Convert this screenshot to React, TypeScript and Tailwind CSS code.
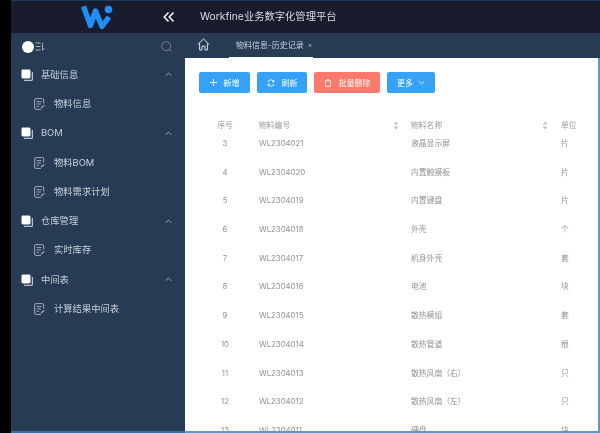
const font = { fontFamily: '"Inter","Noto Sans CJK SC",sans-serif' };

const rows = [
  ["3", "WL2304021", "液晶显示屏", "片"],
  ["4", "WL2304020", "内置触摸板", "片"],
  ["5", "WL2304019", "内置键盘", "片"],
  ["6", "WL2304018", "外壳", "个"],
  ["7", "WL2304017", "机身外壳", "套"],
  ["8", "WL2304016", "电池", "块"],
  ["9", "WL2304015", "散热模组", "套"],
  ["10", "WL2304014", "散热管道", "根"],
  ["11", "WL2304013", "散热风扇（右）", "只"],
  ["12", "WL2304012", "散热风扇（左）", "只"],
  ["13", "WL2304011", "硬盘", "块"],
];

const menu = [
  { title: "基础信息", items: ["物料信息"] },
  { title: "BOM", items: ["物料BOM", "物料需求计划"] },
  { title: "仓库管理", items: ["实时库存"] },
  { title: "中间表", items: ["计算结果中间表"] },
];

function Logo() {
  return (
    <svg width="36" height="28" viewBox="0 0 36 28" fill="none">
      <path d="M4.5 3.5 L11.5 22.5 L16.5 8 L23 23.5 L30 14" stroke="#1e8ff5" strokeWidth="5.4" strokeLinejoin="round" />
      <circle cx="29.5" cy="6.5" r="3.8" fill="#1e8ff5" />
    </svg>
  );
}

function SectionIcon() {
  return (
    <svg width="12" height="12" viewBox="0 0 12 12" fill="none">
      <path d="M3 11.3 H11.3 V3" stroke="#dfe4ea" strokeWidth="1" />
      <rect x="0.5" y="0.5" width="9" height="9" rx="1.4" fill="#ffffff" />
    </svg>
  );
}

function ItemIcon() {
  return (
    <svg width="11" height="12" viewBox="0 0 11 12" fill="none" stroke="#a9b7c8" strokeWidth="0.9">
      <path d="M9.7 5.5 V2 A1.4 1.4 0 0 0 8.3 0.6 H2 A1.4 1.4 0 0 0 0.6 2 V10 A1.4 1.4 0 0 0 2 11.4 H7" />
      <path d="M2.6 3.6 H7.6 M2.6 6 H7 M2.6 8.4 H5" />
      <path d="M7 10 L10.3 7.4" strokeWidth="1.2" />
    </svg>
  );
}

function Chevron() {
  return (
    <svg width="7" height="5" viewBox="0 0 7 5" fill="none" stroke="#aab6c5" strokeWidth="0.9">
      <path d="M0.7 3.8 L3.5 1 L6.3 3.8" />
    </svg>
  );
}

function Sorter() {
  return (
    <svg width="6" height="9" viewBox="0 0 6 9" fill="#c4c4c4">
      <path d="M3 0.5 L5.6 3.5 H0.4 Z M3 8.5 L0.4 5.5 H5.6 Z" />
    </svg>
  );
}

function Btn({ children, icon, w, red }: { children: string; icon: React.ReactNode; w: string; red?: boolean }) {
  return (
    <div className={`${w} ${red ? "bg-[#fb7a6c]" : "bg-[#35a2f8]"} h-[21px] rounded-[2px] flex items-center justify-center gap-[7px] text-white text-[8px]`}>
      {icon}
      <span>{children}</span>
    </div>
  );
}

export default function App() {
  return (
    <div className="w-[600px] h-[433px] overflow-hidden flex bg-black blur-[0.4px]" style={font}>
      <div className="w-[11px] shrink-0 bg-black" />
      <div className="flex-1 flex flex-col min-w-0 bg-[#273b55]">
        <header className="h-[33px] shrink-0 flex items-center bg-[#181c2d] border-t border-t-[#1b3c5e]">
          <div className="w-[68px] shrink-0" />
          <Logo />
          <svg className="ml-[48px]" width="12" height="12" viewBox="0 0 12 12" fill="none" stroke="#ffffff" strokeWidth="1.5">
            <path d="M5.5 1.5 L1.2 6 L5.5 10.5 M10.5 1.5 L6.2 6 L10.5 10.5" />
          </svg>
          <div className="ml-[25px] text-[10.3px] text-[#d9dde3] whitespace-nowrap">Workfine业务数字化管理平台</div>
        </header>
        <div className="flex-1 min-h-0 flex">
          <aside className="w-[174px] shrink-0 flex flex-col">
            <div className="h-[27px] shrink-0 flex items-center pl-[11px] pr-[13px]">
              <div className="w-[12px] h-[12px] rounded-full bg-white" />
              <svg className="ml-[1px]" width="10" height="9" viewBox="0 0 10 9" fill="none" stroke="#c9d1da" strokeWidth="0.8">
                <path d="M0.5 1 H5.5 M0.5 4.5 H5.5 M0.5 8 H5.5 M7.5 1 V8 L9.5 6.5" />
              </svg>
              <svg className="ml-auto" width="11" height="11" viewBox="0 0 11 11" fill="none" stroke="#7f8d9e" strokeWidth="0.9">
                <circle cx="5.2" cy="5.2" r="4.5" />
                <path d="M8.6 8.6 L10.4 10.4" />
              </svg>
            </div>
            {menu.map((s) => (
              <div key={s.title} className="flex flex-col">
                <div className="h-[29.3px] flex items-center pl-[10px] pr-[13px]">
                  <SectionIcon />
                  <span className="ml-[8px] text-[9.3px] text-[#c9d1da]">{s.title}</span>
                  <span className="ml-auto flex"><Chevron /></span>
                </div>
                {s.items.map((it) => (
                  <div key={it} className="h-[29.3px] flex items-center pl-[23px]">
                    <ItemIcon />
                    <span className="ml-[9px] text-[9.3px] text-[#c9d1da]">{it}</span>
                  </div>
                ))}
              </div>
            ))}
            <div className="mt-auto h-[2px] bg-[#3f6f9e]" />
          </aside>
          <main className="flex-1 min-w-0 flex flex-col bg-[#6b93bb]">
            <div className="h-[25px] shrink-0 flex items-start bg-[#273b55]">
              <svg className="ml-[12px] mt-[5px]" width="13" height="13" viewBox="0 0 13 13" fill="none" stroke="#dfe4ea" strokeWidth="1">
                <path d="M0.8 6.5 L6.5 0.9 L12.2 6.5 M2.6 5.4 V12 H5 V8.2 H8 V12 H10.4 V5.4" />
              </svg>
              <div className="ml-[19px] w-[84px] h-[25px] flex items-center justify-start pl-[7px] gap-[4px] border-b border-b-white text-[8px] text-[#c9d1da] whitespace-nowrap">
                <span>物料信息-历史记录</span>
                <span className="text-[7px] text-[#aab6c5]">×</span>
              </div>
            </div>
            <div className="flex-1 min-h-0 mr-[2px] mb-[2px] overflow-hidden bg-white pt-[14px] pl-[14px]">
              <div className="flex gap-[7px]">
                <Btn w="w-[51px]" icon={<svg width="7" height="7" viewBox="0 0 7 7" stroke="#fff" strokeWidth="0.9"><path d="M3.5 0 V7 M0 3.5 H7" /></svg>}>新增</Btn>
                <Btn w="w-[50px]" icon={<svg width="8" height="8" viewBox="0 0 8 8" fill="none" stroke="#fff" strokeWidth="0.9"><path d="M1 3 A3.1 3.1 0 0 1 6.8 2.6 M7 5 A3.1 3.1 0 0 1 1.2 5.4 M6.9 1 V2.8 H5.2 M1.1 7 V5.2 H2.8" /></svg>}>刷新</Btn>
                <Btn w="w-[66px]" red icon={<svg width="8" height="8" viewBox="0 0 8 8" fill="none" stroke="#fff" strokeWidth="0.8"><path d="M0.8 1.8 H7.2 M3 1.8 V0.6 H5 V1.8 M1.6 1.8 V7.5 H6.4 V1.8" /></svg>}>批量删除</Btn>
                <div className="w-[48px] h-[21px] rounded-[2px] bg-[#35a2f8] flex items-center justify-center gap-[5px] text-white text-[8px]">
                  <span>更多</span>
                  <svg width="7" height="5" viewBox="0 0 7 5" fill="none" stroke="#fff" strokeWidth="0.8"><path d="M0.7 1 L3.5 3.8 L6.3 1" /></svg>
                </div>
              </div>
              <div className="mt-[24px] grid grid-cols-[52px_142px_18px_131px_19px_38px] text-[7.8px] text-[#929292]">
                <div className="h-[17px] flex items-center justify-center text-[#9a9a9a]">序号</div>
                <div className="h-[17px] flex items-center pl-[8px] text-[#9a9a9a]">物料编号</div>
                <div className="h-[17px] flex items-center"><Sorter /></div>
                <div className="h-[17px] flex items-center text-[#9a9a9a]">物料名称</div>
                <div className="h-[17px] flex items-center"><Sorter /></div>
                <div className="h-[17px] flex items-center text-[#9a9a9a]">单位</div>
                {rows.map((r) => (
                  <div key={r[0]} className="col-span-6 grid grid-cols-subgrid h-[28.7px] pb-[9px] items-center">
                    <div className="text-center">{r[0]}</div>
                    <div className="pl-[8px]">{r[1]}</div>
                    <div />
                    <div>{r[2]}</div>
                    <div />
                    <div>{r[3]}</div>
                  </div>
                ))}
              </div>
            </div>
          </main>
        </div>
      </div>
    </div>
  );
}
